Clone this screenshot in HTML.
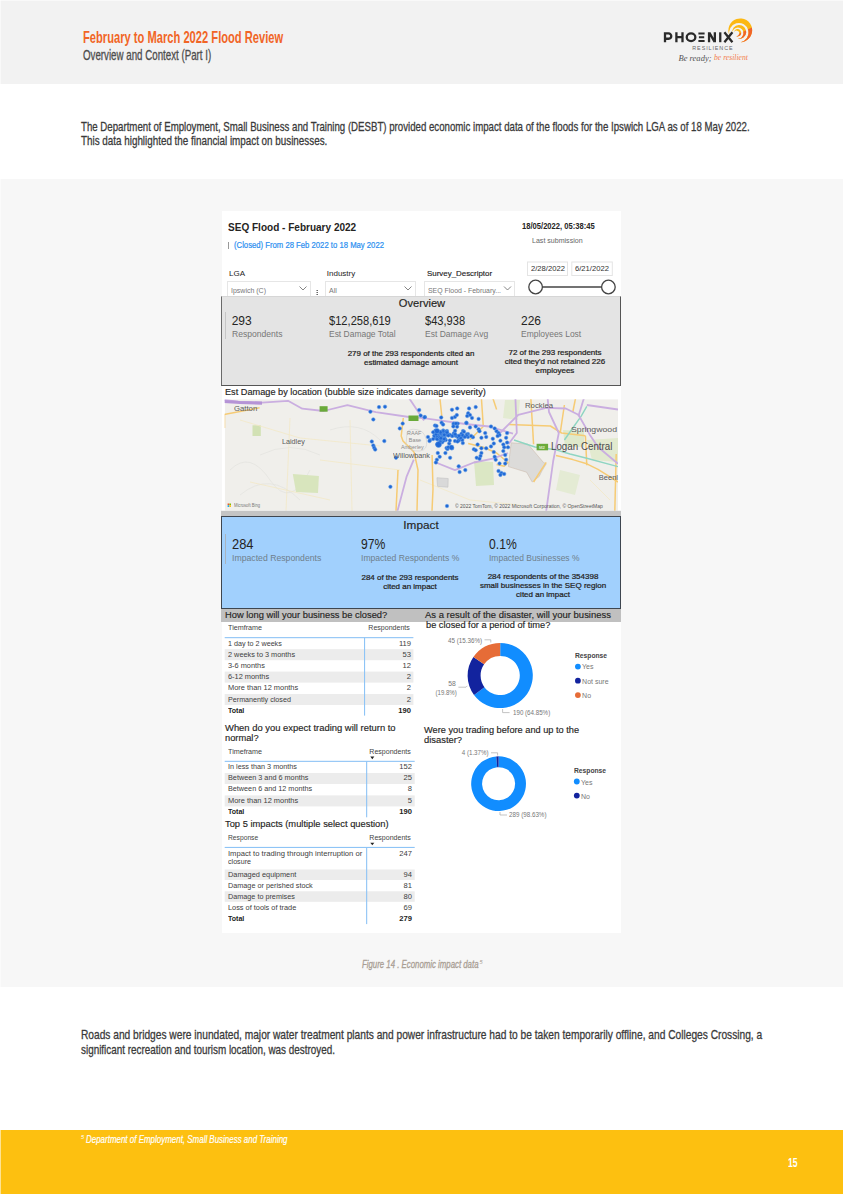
<!DOCTYPE html>
<html><head><meta charset="utf-8">
<style>
html,body{margin:0;padding:0;}
body{width:843px;height:1194px;position:relative;overflow:hidden;background:#fff;font-family:"Liberation Sans",sans-serif;}
.t{position:absolute;white-space:nowrap;line-height:1;}
.b{position:absolute;box-sizing:border-box;}
svg{position:absolute;overflow:visible;}
</style></head><body>
<!-- bands -->
<div class="b" style="left:0;top:0;width:843px;height:84px;background:#f2f2f2"></div>
<div class="b" style="left:0;top:179px;width:843px;height:808px;background:#f7f7f7"></div>
<div class="b" style="left:0;top:1130px;width:843px;height:64px;background:#fdc010"></div>

<div class="b" style="left:0;top:0;width:1px;height:1194px;background:rgba(255,255,255,0.55)"></div>
<div class="b" style="left:0;top:0;width:843px;height:1px;background:rgba(255,255,255,0.5)"></div>
<!-- logo -->
<svg style="left:0;top:0" width="843" height="90" viewBox="0 0 843 90">
  <defs>
    <clipPath id="orng"><path d="M720 38.5 L730 38 L755 26 L760 26 L760 50 L720 50 Z"/></clipPath>
    <g id="swoosh">
      <path d="M729.6 35.6 A11.9 11.9 0 1 1 740.6 42.2 A9.7 9.7 0 1 0 729.6 35.6 Z"/>
      <path d="M732.3 33.2 A7.0 7.0 0 1 1 737.8 38.8 A5.6 5.6 0 1 0 732.3 33.2 Z"/>
      <path d="M733.8 32.6 A3.7 3.7 0 1 1 736.2 36.2 A2.8 2.8 0 1 0 733.8 32.6 Z"/>
    </g>
  </defs>
  <use href="#swoosh" fill="#fcb813"/>
  <use href="#swoosh" fill="#f0642a" clip-path="url(#orng)"/>
  <g fill="none" stroke="#2a2a2a" stroke-width="2.3">
    <path d="M665 42.2 V33.45 H668.6 A2.65 2.65 0 0 1 668.6 38.75 H665"/>
    <path d="M676.4 32.3 V42.2 M682.5 32.3 V42.2 M676.4 37.2 H682.5"/>
    <ellipse cx="691.05" cy="37.25" rx="4.3" ry="3.8"/>
    <path d="M698.4 33.45 H704.6 M698.9 37.25 H704.2 M698.4 41.05 H704.6" stroke-width="2.1"/>
    <path d="M709.05 42.2 V32.3 M714.85 42.2 V32.3 M709.3 32.6 L714.6 41.9"/>
    <path d="M720.25 32.3 V42.2"/>
    <path d="M724.4 32.3 L732.4 42.2 M732.4 32.3 L724.4 42.2"/>
  </g>
  <text x="692.3" y="49.6" font-family="Liberation Sans" font-size="5.4" fill="#666" textLength="40.3" lengthAdjust="spacing">RESILIENCE</text>
  <text x="678.5" y="60.5" font-family="Liberation Serif" font-style="italic" font-size="9" fill="#555555" textLength="33" lengthAdjust="spacingAndGlyphs">Be ready;</text>
  <text x="714" y="59.8" font-family="Liberation Serif" font-style="italic" font-size="8" fill="#f27e4c" textLength="34" lengthAdjust="spacingAndGlyphs">be resilient</text>
</svg>
<!-- dashboard -->
<div class="b" style="left:221.5px;top:211px;width:399.5px;height:722px;background:#fff"></div>
<!-- title accent bar -->
<div class="b" style="left:228.3px;top:242px;width:1px;height:7px;background:#999"></div>
<!-- dropdowns -->
<div class="b" style="left:227.2px;top:281.2px;width:83.4px;height:20px;border:1px solid #e6e6e6;background:#fff"></div>
<div class="b" style="left:325px;top:281.2px;width:91px;height:20px;border:1px solid #e6e6e6;background:#fff"></div>
<div class="b" style="left:424.4px;top:281.2px;width:91px;height:20px;border:1px solid #e6e6e6;background:#fff"></div>
<svg style="left:0;top:0" width="843" height="300" viewBox="0 0 843 300">
  <g fill="none" stroke="#666" stroke-width="0.8">
    <polyline points="299.5,286.5 303,290 306.5,286.5"/>
    <polyline points="404.5,286.5 408,290 411.5,286.5"/>
    <polyline points="504,286.5 507.5,290 511,286.5"/>
  </g>
  <g fill="#555"><rect x="316.5" y="290" width="1.4" height="1"/><rect x="316.5" y="292" width="1.4" height="1"/><rect x="316.5" y="294" width="1.4" height="1"/></g>
  <!-- date boxes -->
  <rect x="527.5" y="262" width="40" height="13.5" fill="#fff" stroke="#e4e4e4" stroke-width="1"/>
  <rect x="571.8" y="262" width="40.5" height="13.5" fill="#fff" stroke="#e4e4e4" stroke-width="1"/>
  <!-- slider -->
  <line x1="542.5" y1="287" x2="601.5" y2="287" stroke="#444" stroke-width="1.4"/>
  <circle cx="535.6" cy="287" r="6.8" fill="#fff" stroke="#444" stroke-width="1.3"/>
  <circle cx="608.4" cy="287" r="6.8" fill="#fff" stroke="#444" stroke-width="1.3"/>
</svg>

<!-- overview panel -->
<div class="b" style="left:221.2px;top:296px;width:399.7px;height:90.4px;background:#e4e4e4;border-left:1.8px solid #6a6a6a;border-right:1.5px solid #555;border-bottom:1.5px solid #555;border-top:1px solid #d6d6d6"></div>
<div class="b" style="left:225.1px;top:311.8px;width:1.3px;height:27.5px;background:#c6c6c6"></div>

<!-- map -->
<svg style="left:0;top:0" width="843" height="520" viewBox="0 0 843 520">
  <defs><clipPath id="mc"><rect x="224.7" y="399.2" width="393.3" height="111.6"/></clipPath></defs>
  <g clip-path="url(#mc)">
    <rect x="224.7" y="399.2" width="393.3" height="111.6" fill="#f0efeb"/>
    <!-- subtle terrain -->
    <g fill="none" stroke="#e3e2de" stroke-width="0.7">
      <path d="M230 470 Q250 450 270 480 T310 470"/>
      <path d="M240 495 Q270 470 300 500"/>
      <path d="M330 430 Q360 420 380 440"/>
      <path d="M260 455 Q290 440 320 455"/>
    </g>
    <!-- green patches -->
    <rect x="252.5" y="425.3" width="8.3" height="10.7" fill="#d2e1b4"/>
    <path d="M292.8 474 L318.9 476 L318 493 L296 492 Z" fill="#d8e5bd"/>
    <path d="M474 461 L493 462 L494 485 L476 486 Z" fill="#dbe7c4"/>
    <path d="M563 430 L584 431 L584 447 L565 447 Z" fill="#dfe9cb"/>
    <path d="M587 440 L618 438 L618 462 L592 460 Z" fill="#e2eacf"/>
    <path d="M505 400 L520 400 L518 420 L503 418 Z" fill="#e3ebd2"/>
    <path d="M560 470 L580 475 L575 495 L556 490 Z" fill="#e4ebd4"/>
    <!-- gray polygons -->
    <path d="M511.2 442.8 L528 444.2 L543.4 462.4 L546.2 463.8 L542 470.8 L539.2 476.4 L532.2 482 L526.6 472.2 L508.4 466.6 L509.8 454 Z" fill="#dcdbd9" stroke="#cdbcae" stroke-width="0.6"/>
    <path d="M436.9 477.7 L448.2 478.5 L448 487.2 L437.5 486.5 Z" fill="#d9d9d9" stroke="#bdbdbd" stroke-width="0.5"/>
    <!-- minor light roads -->
    <g fill="none" stroke="#f2e8c6" stroke-width="0.8">
      <path d="M240 420 L300 438 L380 446"/>
      <path d="M290 418 L286 511"/>
      <path d="M320 460 L400 470"/>
      <path d="M250 482 L330 500"/>
      <path d="M350 420 L352 511"/>
      <path d="M420 480 L470 500 L520 505"/>
      <path d="M590 480 L610 500"/>
    </g>
    <!-- yellow roads -->
    <g fill="none" stroke="#f6cb74" stroke-width="1.5" stroke-linejoin="round">
      <path d="M224 414.6 L259.6 407.7"/>
      <path d="M224.5 414.6 L224.5 428"/>
      <path d="M414 452 L418 470 L417 511"/>
      <path d="M403.3 418 L401.2 436 L403 441 L414 452"/>
      <path d="M432.1 455 L433 489 L432 511"/>
      <path d="M481.4 398 L483.3 426.5 L470 439.7"/>
      <path d="M492.8 398 L496.6 409.4"/>
      <path d="M468.2 443.5 L483.3 447.3 L496.6 453 L508 462.5 L504.2 466.3 L496.6 464.4"/>
      <path d="M508.4 424.6 L550.4 426 L561.6 433 L585.4 435.8"/>
      <path d="M530.8 398 L533.6 444.2"/>
      <path d="M564.4 405 L560.2 433"/>
      <path d="M575.6 398 L572.8 412"/>
      <path d="M556 455.4 L572.8 459.6 L586.8 463.8 L598 469.4 L609.2 476.4 L618 482"/>
      <path d="M585.4 435.8 L586.8 465.2"/>
      <path d="M546.2 462.4 L540.6 470.8 L533.6 482"/>
      <path d="M616.2 454 L614.8 511"/>
      <path d="M398 470 L396 511"/>
      <path d="M440 399 L442 418"/>
    </g>
    <!-- teal -->
    <g fill="none" stroke="#8ed5c2" stroke-width="1.4" stroke-linejoin="round">
      <path d="M514 440 L535 447 L556 449.8 L570 454 L586.8 458.2 L618 466.6"/>
      <path d="M564.4 440 L574.2 426 L581.2 416.2 L586.8 406.4"/>
    </g>
    <!-- purple highways -->
    <g fill="none" stroke="#caaee0" stroke-width="1.8" stroke-linejoin="round">
      <path d="M224 399.9 L238.2 401.6 L262 402.7 L288 400.8 L302.3 408.7 L323.6 411 L347.4 405.1 L361.6 408.7 L375.8 412.2 L409 417 L424 418.2 L432.2 419.4 L465.4 424 L489.2 426.5 L513 433.6"/>
      <path d="M409 398 L424 420.5"/>
      <path d="M413.8 459.7 L406.7 476.3 L397.2 512"/>
      <path d="M435.9 462.5 L454.9 470.1 L473.9 462.5 L492.8 458.7 L508 453"/>
      <path d="M500 433 L518.2 414.8 L546.2 407.8 L565.8 408.5 L578.4 414.8 L589.6 434.4 L598 447 L618 463.8"/>
      <path d="M547.6 398 L549 412 L558.8 433 L553.2 461 L546.2 511"/>
      <path d="M584 398 L578.4 416.2"/>
      <path d="M515.4 398 L516.8 433 L508.4 444.2"/>
      <path d="M586.8 405 L618 409.5"/>
    </g>
    <path d="M224 401.5 L240 402.5 L262 403.2" fill="none" stroke="#b594d6" stroke-width="3.2"/>
    <!-- shields -->
    <rect x="319.6" y="406.2" width="8" height="5.5" fill="#6aaa3a"/>
    <rect x="408.5" y="415.5" width="10" height="5.5" fill="#6aaa3a"/>
    <rect x="536.6" y="443.8" width="11.5" height="6.5" fill="#6aaa3a"/>
    <text x="539" y="449" font-size="4.3" fill="#dfeccc" font-family="Liberation Sans" font-weight="700">M2</text>
    <!-- RAAF label -->
    <path d="M407 432 Q410 428.5 416 429.5 Q424 430 426.5 440 Q428 450 420 451 Q410 451.5 406 446 Z" fill="none" stroke="#cfcfcf" stroke-width="0.6"/>
    <text x="407" y="434.6" font-size="5.4" fill="#8c8c8c" font-family="Liberation Sans">RAAF</text>
    <text x="408.8" y="441.7" font-size="5.4" fill="#8c8c8c" font-family="Liberation Sans">Base</text>
    <text x="401" y="448.5" font-size="5.4" fill="#8c8c8c" font-family="Liberation Sans">Amberley</text>
    <!-- bing logo -->
    <rect x="227.6" y="503.5" width="1.6" height="1.6" fill="#f25022"/><rect x="229.4" y="503.5" width="1.6" height="1.6" fill="#7fba00"/>
    <rect x="227.6" y="505.3" width="1.6" height="1.6" fill="#00a4ef"/><rect x="229.4" y="505.3" width="1.6" height="1.6" fill="#ffb900"/>
    <!-- dots -->
    <g fill="#1f68d6" stroke="#5d9be6" stroke-width="0.55"><circle cx="370.4" cy="411.7" r="1.75"/><circle cx="379.0" cy="407.1" r="1.75"/><circle cx="385.0" cy="406.7" r="1.75"/><circle cx="373.3" cy="419.4" r="1.75"/><circle cx="402.7" cy="423.6" r="1.75"/><circle cx="399.8" cy="428.4" r="1.75"/><circle cx="371.8" cy="441.6" r="1.75"/><circle cx="373.3" cy="445.4" r="1.75"/><circle cx="374.2" cy="447.7" r="1.75"/><circle cx="375.2" cy="449.6" r="1.75"/><circle cx="384.3" cy="441.1" r="1.75"/><circle cx="396.0" cy="457.8" r="1.75"/><circle cx="390.4" cy="486.8" r="1.75"/><circle cx="419.2" cy="410.0" r="1.75"/><circle cx="420.7" cy="415.6" r="1.75"/><circle cx="424.9" cy="417.0" r="1.75"/><circle cx="441.2" cy="417.5" r="1.75"/><circle cx="441.6" cy="422.7" r="1.75"/><circle cx="443.1" cy="424.6" r="1.75"/><circle cx="452.0" cy="409.8" r="1.75"/><circle cx="457.2" cy="408.4" r="1.75"/><circle cx="454.9" cy="417.0" r="1.75"/><circle cx="452.0" cy="417.9" r="1.75"/><circle cx="456.8" cy="415.1" r="1.75"/><circle cx="469.1" cy="408.4" r="1.75"/><circle cx="475.7" cy="407.1" r="1.75"/><circle cx="468.2" cy="413.2" r="1.75"/><circle cx="470.0" cy="415.1" r="1.75"/><circle cx="467.2" cy="416.0" r="1.75"/><circle cx="472.0" cy="417.9" r="1.75"/><circle cx="478.6" cy="418.9" r="1.75"/><circle cx="466.3" cy="422.7" r="1.75"/><circle cx="454.0" cy="423.6" r="1.75"/><circle cx="457.7" cy="423.6" r="1.75"/><circle cx="470.0" cy="427.4" r="1.75"/><circle cx="475.7" cy="426.5" r="1.75"/><circle cx="478.6" cy="429.3" r="1.75"/><circle cx="479.5" cy="431.2" r="1.75"/><circle cx="491.0" cy="426.5" r="1.75"/><circle cx="494.7" cy="428.4" r="1.75"/><circle cx="496.6" cy="431.2" r="1.75"/><circle cx="498.5" cy="433.1" r="1.75"/><circle cx="499.5" cy="435.0" r="1.75"/><circle cx="497.6" cy="436.0" r="1.75"/><circle cx="485.2" cy="433.1" r="1.75"/><circle cx="486.2" cy="436.9" r="1.75"/><circle cx="492.8" cy="438.8" r="1.75"/><circle cx="481.4" cy="437.8" r="1.75"/><circle cx="477.6" cy="444.5" r="1.75"/><circle cx="473.9" cy="449.2" r="1.75"/><circle cx="475.7" cy="450.2" r="1.75"/><circle cx="481.4" cy="448.3" r="1.75"/><circle cx="486.2" cy="448.3" r="1.75"/><circle cx="491.0" cy="446.4" r="1.75"/><circle cx="493.8" cy="443.5" r="1.75"/><circle cx="507.1" cy="433.1" r="1.75"/><circle cx="506.1" cy="437.8" r="1.75"/><circle cx="507.1" cy="442.6" r="1.75"/><circle cx="508.0" cy="447.3" r="1.75"/><circle cx="500.4" cy="440.7" r="1.75"/><circle cx="503.3" cy="444.5" r="1.75"/><circle cx="504.2" cy="447.3" r="1.75"/><circle cx="503.3" cy="451.1" r="1.75"/><circle cx="505.2" cy="454.9" r="1.75"/><circle cx="506.1" cy="459.7" r="1.75"/><circle cx="505.2" cy="463.5" r="1.75"/><circle cx="499.5" cy="463.5" r="1.75"/><circle cx="494.7" cy="456.8" r="1.75"/><circle cx="495.7" cy="459.7" r="1.75"/><circle cx="481.4" cy="453.0" r="1.75"/><circle cx="480.5" cy="455.9" r="1.75"/><circle cx="476.7" cy="457.8" r="1.75"/><circle cx="479.5" cy="458.7" r="1.75"/><circle cx="493.8" cy="452.1" r="1.75"/><circle cx="437.8" cy="453.0" r="1.75"/><circle cx="439.7" cy="456.8" r="1.75"/><circle cx="436.9" cy="459.7" r="1.75"/><circle cx="435.9" cy="462.5" r="1.75"/><circle cx="445.4" cy="453.0" r="1.75"/><circle cx="450.1" cy="457.8" r="1.75"/><circle cx="458.7" cy="466.3" r="1.75"/><circle cx="465.3" cy="470.1" r="1.75"/><circle cx="459.6" cy="472.0" r="1.75"/><circle cx="498.5" cy="471.0" r="1.75"/><circle cx="501.4" cy="473.0" r="1.75"/><circle cx="504.2" cy="473.9" r="1.75"/><circle cx="500.4" cy="474.9" r="1.75"/><circle cx="451.1" cy="447.3" r="1.75"/><circle cx="452.0" cy="448.3" r="1.75"/><circle cx="447.0" cy="506.0" r="1.75"/><circle cx="424.6" cy="417.3" r="1.75"/><circle cx="435.0" cy="425.5" r="1.75"/><circle cx="436.5" cy="426.0" r="1.75"/><circle cx="447.0" cy="431.0" r="1.75"/><circle cx="453.5" cy="424.0" r="1.75"/><circle cx="456.0" cy="423.5" r="1.75"/><circle cx="466.5" cy="423.0" r="1.75"/><circle cx="463.0" cy="431.0" r="1.75"/><circle cx="468.0" cy="434.0" r="1.75"/><circle cx="461.0" cy="436.0" r="1.75"/><circle cx="452.0" cy="436.0" r="1.75"/><circle cx="455.0" cy="441.0" r="1.75"/><circle cx="459.0" cy="440.0" r="1.75"/><circle cx="468.0" cy="437.0" r="1.75"/><circle cx="428.0" cy="437.0" r="1.75"/><circle cx="430.0" cy="440.0" r="1.75"/><circle cx="429.5" cy="441.0" r="1.75"/><circle cx="446.5" cy="448.0" r="1.75"/><circle cx="447.5" cy="449.0" r="1.75"/><circle cx="435.3" cy="437.6" r="1.75"/><circle cx="443.8" cy="433.8" r="1.75"/><circle cx="434.9" cy="435.7" r="1.75"/><circle cx="441.8" cy="440.6" r="1.75"/><circle cx="435.4" cy="430.6" r="1.75"/><circle cx="442.7" cy="438.0" r="1.75"/><circle cx="445.8" cy="440.1" r="1.75"/><circle cx="439.6" cy="434.8" r="1.75"/><circle cx="449.8" cy="434.8" r="1.75"/><circle cx="437.0" cy="431.2" r="1.75"/><circle cx="440.4" cy="436.6" r="1.75"/><circle cx="438.7" cy="435.7" r="1.75"/><circle cx="441.0" cy="438.9" r="1.75"/><circle cx="444.2" cy="436.9" r="1.75"/><circle cx="433.2" cy="438.9" r="1.75"/><circle cx="434.6" cy="435.3" r="1.75"/><circle cx="434.4" cy="436.0" r="1.75"/><circle cx="437.0" cy="436.9" r="1.75"/><circle cx="452.5" cy="435.8" r="1.75"/><circle cx="443.2" cy="430.4" r="1.75"/><circle cx="438.9" cy="438.8" r="1.75"/><circle cx="439.6" cy="437.6" r="1.75"/><circle cx="440.4" cy="431.8" r="1.75"/><circle cx="442.1" cy="432.6" r="1.75"/><circle cx="447.1" cy="433.9" r="1.75"/><circle cx="442.6" cy="436.0" r="1.75"/><circle cx="443.6" cy="433.5" r="1.75"/><circle cx="443.8" cy="435.5" r="1.75"/><circle cx="444.8" cy="438.6" r="1.75"/><circle cx="440.5" cy="432.7" r="1.75"/><circle cx="442.9" cy="438.0" r="1.75"/><circle cx="446.2" cy="434.4" r="1.75"/><circle cx="442.1" cy="438.1" r="1.75"/><circle cx="441.1" cy="436.9" r="1.75"/><circle cx="440.7" cy="433.5" r="1.75"/><circle cx="436.1" cy="434.3" r="1.75"/><circle cx="442.2" cy="442.3" r="1.75"/><circle cx="443.7" cy="440.4" r="1.75"/><circle cx="443.0" cy="438.9" r="1.75"/><circle cx="440.7" cy="439.2" r="1.75"/><circle cx="446.7" cy="434.6" r="1.75"/><circle cx="437.4" cy="444.2" r="1.75"/><circle cx="440.9" cy="440.1" r="1.75"/><circle cx="443.3" cy="431.2" r="1.75"/><circle cx="449.2" cy="443.5" r="1.75"/><circle cx="440.7" cy="439.2" r="1.75"/><circle cx="440.5" cy="432.3" r="1.75"/><circle cx="439.6" cy="437.6" r="1.75"/><circle cx="444.2" cy="439.0" r="1.75"/><circle cx="440.2" cy="441.7" r="1.75"/><circle cx="437.1" cy="439.3" r="1.75"/><circle cx="444.2" cy="434.8" r="1.75"/><circle cx="433.2" cy="432.2" r="1.75"/><circle cx="440.9" cy="438.2" r="1.75"/><circle cx="445.9" cy="431.8" r="1.75"/><circle cx="458.0" cy="437.3" r="1.75"/><circle cx="457.1" cy="426.7" r="1.75"/><circle cx="462.8" cy="443.1" r="1.75"/><circle cx="464.0" cy="431.8" r="1.75"/><circle cx="455.5" cy="435.8" r="1.75"/><circle cx="472.9" cy="437.2" r="1.75"/><circle cx="458.7" cy="440.5" r="1.75"/><circle cx="457.5" cy="441.5" r="1.75"/><circle cx="453.9" cy="433.3" r="1.75"/><circle cx="462.3" cy="440.0" r="1.75"/><circle cx="461.9" cy="436.1" r="1.75"/><circle cx="447.1" cy="432.5" r="1.75"/><circle cx="454.3" cy="433.1" r="1.75"/><circle cx="461.5" cy="433.8" r="1.75"/><circle cx="462.7" cy="435.3" r="1.75"/><circle cx="456.0" cy="435.4" r="1.75"/><circle cx="460.6" cy="438.0" r="1.75"/><circle cx="455.1" cy="434.2" r="1.75"/><circle cx="449.8" cy="440.6" r="1.75"/><circle cx="466.7" cy="434.4" r="1.75"/><circle cx="455.1" cy="430.7" r="1.75"/><circle cx="459.0" cy="435.7" r="1.75"/><circle cx="471.1" cy="435.9" r="1.75"/><circle cx="453.3" cy="426.4" r="1.75"/><circle cx="466.5" cy="435.7" r="1.75"/><circle cx="448.3" cy="435.6" r="1.75"/><circle cx="448.3" cy="447.2" r="1.75"/><circle cx="464.7" cy="437.0" r="1.75"/><circle cx="438.5" cy="444.5" r="3"/><circle cx="437" cy="431" r="2.6"/><circle cx="451.5" cy="447.5" r="2.4"/></g>
  </g>
  <rect x="221" y="510.8" width="400" height="5.2" fill="#c4c4c4"/>
</svg>

<!-- impact panel -->
<div class="b" style="left:221.2px;top:515.8px;width:399.7px;height:93.2px;background:#a1d0fd;border:1.5px solid #3e4650;border-left-width:1.8px"></div>
<div class="b" style="left:225.1px;top:533.8px;width:1.3px;height:30px;background:#a9b4bf"></div>

<!-- section title bands -->
<div class="b" style="left:221px;top:609px;width:400px;height:12.6px;background:#c0c0c0"></div>

<!-- tables -->
<svg style="left:0;top:0" width="843" height="940" viewBox="0 0 843 940">
  <g fill="#ececec">
    <rect x="224.7" y="649.2" width="188.7" height="11"/>
    <rect x="224.7" y="671.6" width="188.7" height="11"/>
    <rect x="224.7" y="694" width="188.7" height="11"/>
    <rect x="224.7" y="773" width="190" height="11"/>
    <rect x="224.7" y="795.4" width="190" height="11"/>
    <rect x="224.7" y="869.5" width="190" height="10.5"/>
    <rect x="224.7" y="891.3" width="190" height="10.5"/>
  </g>
  <g fill="#8ec4f6">
    <rect x="224.7" y="637.1" width="188.7" height="1.1"/>
    <rect x="364" y="637.6" width="1.1" height="78"/>
    <rect x="224.7" y="760.8" width="190" height="1.1"/>
    <rect x="366.1" y="761.3" width="1.1" height="56"/>
    <rect x="224.7" y="846.9" width="190" height="1.1"/>
    <rect x="366.1" y="847.4" width="1.1" height="76.7"/>
  </g>
  <g fill="#222">
    <path d="M370.3 756.6 L374.3 756.6 L372.3 759.2 Z"/>
    <path d="M370.3 842.7 L374.3 842.7 L372.3 845.3 Z"/>
  </g>
  <!-- donut 1: center 500.2,675.5 r 32.6 / 19.6 -->
  <g transform="translate(500.2 675.5)">
    <path id="d1a" fill="#118dff"/>
  </g>
</svg>
<svg style="left:0;top:0" width="843" height="940" viewBox="0 0 843 940">
  <path d="M500.20 642.90 A32.6 32.6 0 1 1 474.01 694.91 L484.45 687.17 A19.6 19.6 0 1 0 500.20 655.90 Z" fill="#118dff"/>
<path d="M474.01 694.91 A32.6 32.6 0 0 1 473.41 656.92 L484.09 664.33 A19.6 19.6 0 0 0 484.45 687.17 Z" fill="#12239e"/>
<path d="M473.41 656.92 A32.6 32.6 0 0 1 500.19 642.90 L500.20 655.90 A19.6 19.6 0 0 0 484.09 664.33 Z" fill="#e66c37"/>
<path d="M498.60 756.30 A27.4 27.4 0 1 1 496.24 756.40 L497.18 767.26 A16.5 16.5 0 1 0 498.60 767.20 Z" fill="#118dff"/>
<path d="M496.24 756.40 A27.4 27.4 0 0 1 498.60 756.30 L498.60 767.20 A16.5 16.5 0 0 0 497.18 767.26 Z" fill="#12239e"/>
  <g fill="#118dff"><circle cx="577.9" cy="666.6" r="2.9"/><circle cx="576.8" cy="781.5" r="2.9"/></g>
  <g fill="#12239e"><circle cx="577.9" cy="680.7" r="2.9"/><circle cx="576.8" cy="795.6" r="2.9"/></g>
  <g fill="#e66c37"><circle cx="577.9" cy="695.1" r="2.9"/></g>
  <g fill="none" stroke="#aaa" stroke-width="0.7">
    <polyline points="484.5,639.8 490.8,639.8 490.8,642.5"/>
    <polyline points="458.4,687.2 466,687.2 467.4,685.8"/>
    <polyline points="502.6,709 502.6,712.6 509.6,712.6"/>
    <polyline points="491,752.8 497.6,752.8 497.6,755.5"/>
    <polyline points="500,812 500,815 507,815"/>
  </g>
</svg>
<div class="t" id="t0" style="top:29.13px;font-size:16.5px;color:#f16526;font-weight:700;left:82.80px;transform:scaleX(0.6760);transform-origin:left 50%;">February to March 2022 Flood Review</div>
<div class="t" id="t1" style="top:47.68px;font-size:14.2px;color:#4d4d4d;-webkit-text-stroke:0.3px #4d4d4d;left:82.80px;transform:scaleX(0.6860);transform-origin:left 50%;">Overview and Context (Part I)</div>
<div class="t" id="t2" style="top:120.00px;font-size:13.0px;color:#3a3a3a;-webkit-text-stroke:0.3px #3a3a3a;left:81.40px;transform:scaleX(0.7432);transform-origin:left 50%;">The Department of Employment, Small Business and Training (DESBT) provided economic impact data of the floods for the Ipswich LGA as of 18 May 2022.</div>
<div class="t" id="t3" style="top:134.20px;font-size:13.0px;color:#3a3a3a;-webkit-text-stroke:0.3px #3a3a3a;left:81.40px;transform:scaleX(0.7574);transform-origin:left 50%;">This data highlighted the financial impact on businesses.</div>
<div class="t" id="t4" style="top:1028.00px;font-size:13.0px;color:#3a3a3a;-webkit-text-stroke:0.3px #3a3a3a;left:81.40px;transform:scaleX(0.7838);transform-origin:left 50%;">Roads and bridges were inundated, major water treatment plants and power infrastructure had to be taken temporarily offline, and Colleges Crossing, a</div>
<div class="t" id="t5" style="top:1042.50px;font-size:13.0px;color:#3a3a3a;-webkit-text-stroke:0.3px #3a3a3a;left:81.40px;transform:scaleX(0.7608);transform-origin:left 50%;">significant recreation and tourism location, was destroyed.</div>
<div class="t" id="t6" style="top:959.41px;font-size:10.5px;color:#a99e94;font-style:italic;-webkit-text-stroke:0.3px #a99e94;left:361.60px;transform:scaleX(0.7448);transform-origin:left 50%;">Figure 14 . Economic impact data</div>
<div class="t" id="t7" style="top:959.84px;font-size:5.5px;color:#a99e94;font-style:italic;left:479.50px;">5</div>
<div class="t" id="t8" style="top:1135.34px;font-size:5.5px;color:#ffffff;font-style:italic;left:81.00px;">5</div>
<div class="t" id="t9" style="top:1135.28px;font-size:10.3px;color:#ffffff;font-style:italic;-webkit-text-stroke:0.2px #ffffff;left:86.00px;transform:scaleX(0.7727);transform-origin:left 50%;">Department of Employment, Small Business and Training</div>
<div class="t" id="t10" style="top:1155.64px;font-size:13.3px;color:#ffffff;font-weight:700;left:788.00px;transform:scaleX(0.6488);transform-origin:left 50%;">15</div>
<div class="t" id="t11" style="top:222.09px;font-size:11px;color:#252423;font-weight:700;left:227.80px;transform:scaleX(0.9118);transform-origin:left 50%;">SEQ Flood - February 2022</div>
<div class="t" id="t12" style="top:241.66px;font-size:8.2px;color:#2b8ff0;-webkit-text-stroke:0.2px #2b8ff0;left:234.20px;transform:scaleX(0.9416);transform-origin:left 50%;">(Closed) From 28 Feb 2022 to 18 May 2022</div>
<div class="t" id="t13" style="top:222.47px;font-size:8.3px;color:#252423;font-weight:700;left:521.70px;transform:scaleX(0.9161);transform-origin:left 50%;">18/05/2022, 05:38:45</div>
<div class="t" id="t14" style="top:237.25px;font-size:7.5px;color:#666666;left:532.40px;transform:scaleX(0.9408);transform-origin:left 50%;">Last submission</div>
<div class="t" id="t15" style="top:269.63px;font-size:8px;color:#252423;-webkit-text-stroke:0.001px #252423;left:229.00px;">LGA</div>
<div class="t" id="t16" style="top:269.63px;font-size:8px;color:#252423;-webkit-text-stroke:0.001px #252423;left:326.80px;">Industry</div>
<div class="t" id="t17" style="top:269.63px;font-size:8px;color:#252423;-webkit-text-stroke:0.15px #252423;left:426.60px;transform:scaleX(0.9892);transform-origin:left 50%;">Survey_Descriptor</div>
<div class="t" id="t18" style="top:286.67px;font-size:7px;color:#777777;left:231.00px;">Ipswich (C)</div>
<div class="t" id="t19" style="top:286.67px;font-size:7px;color:#777777;left:329.00px;">All</div>
<div class="t" id="t20" style="top:286.67px;font-size:7px;color:#777777;left:428.00px;transform:scaleX(0.9892);transform-origin:left 50%;">SEQ Flood - February...</div>
<div class="t" id="t21" style="top:266.00px;font-size:6.5px;color:#333333;left:531.00px;transform:scaleX(1.1756);transform-origin:left 50%;">2/28/2022</div>
<div class="t" id="t22" style="top:266.00px;font-size:6.5px;color:#333333;left:575.00px;transform:scaleX(1.1756);transform-origin:left 50%;">6/21/2022</div>
<div class="t" id="t23" style="top:298.11px;font-size:10.5px;color:#252423;-webkit-text-stroke:0.15px #252423;left:421.60px;transform:translateX(-50%) scaleX(1.0579);transform-origin:center 50%;">Overview</div>
<div class="t" id="t24" style="top:314.54px;font-size:12px;color:#252423;left:231.70px;">293</div>
<div class="t" id="t25" style="top:329.78px;font-size:9px;color:#777777;left:231.70px;transform:scaleX(0.9520);transform-origin:left 50%;">Respondents</div>
<div class="t" id="t26" style="top:314.54px;font-size:12px;color:#252423;left:328.70px;transform:scaleX(0.9261);transform-origin:left 50%;">$12,258,619</div>
<div class="t" id="t27" style="top:329.78px;font-size:9px;color:#777777;left:328.70px;transform:scaleX(0.9397);transform-origin:left 50%;">Est Damage Total</div>
<div class="t" id="t28" style="top:314.54px;font-size:12px;color:#252423;left:424.90px;transform:scaleX(0.9242);transform-origin:left 50%;">$43,938</div>
<div class="t" id="t29" style="top:329.78px;font-size:9px;color:#777777;left:424.90px;transform:scaleX(0.9436);transform-origin:left 50%;">Est Damage Avg</div>
<div class="t" id="t30" style="top:314.54px;font-size:12px;color:#252423;left:521.00px;">226</div>
<div class="t" id="t31" style="top:329.78px;font-size:9px;color:#777777;left:521.00px;transform:scaleX(0.9399);transform-origin:left 50%;">Employees Lost</div>
<div class="t" id="t32" style="top:350.42px;font-size:7.3px;color:#252423;-webkit-text-stroke:0.22px #252423;left:410.70px;transform:translateX(-50%) scaleX(1.0873);transform-origin:center 50%;">279 of the 293 respondents cited an</div>
<div class="t" id="t33" style="top:358.62px;font-size:7.3px;color:#252423;-webkit-text-stroke:0.22px #252423;left:410.70px;transform:translateX(-50%) scaleX(1.0873);transform-origin:center 50%;">estimated damage amount</div>
<div class="t" id="t34" style="top:349.02px;font-size:7.3px;color:#252423;-webkit-text-stroke:0.22px #252423;left:555.40px;transform:translateX(-50%) scaleX(1.0979);transform-origin:center 50%;">72 of the 293 respondents</div>
<div class="t" id="t35" style="top:358.02px;font-size:7.3px;color:#252423;-webkit-text-stroke:0.22px #252423;left:555.40px;transform:translateX(-50%) scaleX(1.0979);transform-origin:center 50%;">cited they'd not retained 226</div>
<div class="t" id="t36" style="top:366.52px;font-size:7.3px;color:#252423;-webkit-text-stroke:0.22px #252423;left:555.40px;transform:translateX(-50%) scaleX(1.0979);transform-origin:center 50%;">employees</div>
<div class="t" id="t37" style="top:387.83px;font-size:9.3px;color:#252423;-webkit-text-stroke:0.15px #252423;left:224.70px;transform:scaleX(0.9876);transform-origin:left 50%;">Est Damage by location (bubble size indicates damage severity)</div>
<div class="t" id="t38" style="top:519.61px;font-size:10.5px;color:#252423;-webkit-text-stroke:0.15px #252423;left:421.40px;transform:translateX(-50%) scaleX(1.1201);transform-origin:center 50%;">Impact</div>
<div class="t" id="t39" style="top:536.75px;font-size:14px;color:#252423;left:231.70px;transform:scaleX(0.9204);transform-origin:left 50%;">284</div>
<div class="t" id="t40" style="top:553.26px;font-size:9.5px;color:#6f7f8c;left:231.70px;transform:scaleX(0.9140);transform-origin:left 50%;">Impacted Respondents</div>
<div class="t" id="t41" style="top:536.75px;font-size:14px;color:#252423;left:360.60px;transform:scaleX(0.8705);transform-origin:left 50%;">97%</div>
<div class="t" id="t42" style="top:553.26px;font-size:9.5px;color:#6f7f8c;left:360.60px;transform:scaleX(0.9035);transform-origin:left 50%;">Impacted Respondents %</div>
<div class="t" id="t43" style="top:536.75px;font-size:14px;color:#252423;left:488.80px;transform:scaleX(0.8677);transform-origin:left 50%;">0.1%</div>
<div class="t" id="t44" style="top:553.26px;font-size:9.5px;color:#6f7f8c;left:488.80px;transform:scaleX(0.8926);transform-origin:left 50%;">Impacted Businesses %</div>
<div class="t" id="t45" style="top:574.32px;font-size:7.3px;color:#252423;-webkit-text-stroke:0.22px #252423;left:410.30px;transform:translateX(-50%) scaleX(1.0927);transform-origin:center 50%;">284 of the 293 respondents</div>
<div class="t" id="t46" style="top:583.22px;font-size:7.3px;color:#252423;-webkit-text-stroke:0.22px #252423;left:410.30px;transform:translateX(-50%) scaleX(1.0927);transform-origin:center 50%;">cited an impact</div>
<div class="t" id="t47" style="top:573.02px;font-size:7.3px;color:#252423;-webkit-text-stroke:0.22px #252423;left:543.40px;transform:translateX(-50%) scaleX(1.0957);transform-origin:center 50%;">284 respondents of the 354398</div>
<div class="t" id="t48" style="top:582.02px;font-size:7.3px;color:#252423;-webkit-text-stroke:0.22px #252423;left:543.40px;transform:translateX(-50%) scaleX(1.0957);transform-origin:center 50%;">small businesses in the SEQ region</div>
<div class="t" id="t49" style="top:591.22px;font-size:7.3px;color:#252423;-webkit-text-stroke:0.22px #252423;left:543.40px;transform:translateX(-50%) scaleX(1.0957);transform-origin:center 50%;">cited an impact</div>
<div class="t" id="t50" style="top:611.03px;font-size:9.3px;color:#252423;-webkit-text-stroke:0.15px #252423;left:224.70px;transform:scaleX(1.0028);transform-origin:left 50%;">How long will your business be closed?</div>
<div class="t" id="t51" style="top:611.03px;font-size:9.3px;color:#252423;-webkit-text-stroke:0.15px #252423;left:425.40px;transform:scaleX(1.0197);transform-origin:left 50%;">As a result of the disaster, will your business</div>
<div class="t" id="t52" style="top:620.73px;font-size:9.3px;color:#252423;-webkit-text-stroke:0.15px #252423;left:425.70px;transform:scaleX(0.9938);transform-origin:left 50%;">be closed for a period of time?</div>
<div class="t" id="t53" style="top:625.29px;font-size:7.1px;color:#444444;left:227.70px;transform:scaleX(1.0137);transform-origin:left 50%;">Tiemframe</div>
<div class="t" id="t54" style="top:625.29px;font-size:7.1px;color:#444444;right:432.80px;transform:scaleX(0.9925);transform-origin:right 50%;">Respondents</div>
<div class="t" id="t55" style="top:640.07px;font-size:7.6px;color:#404040;left:227.70px;transform:scaleX(0.9439);transform-origin:left 50%;">1 day to 2 weeks</div>
<div class="t" id="t56" style="top:640.07px;font-size:7.6px;color:#404040;right:432.00px;">119</div>
<div class="t" id="t57" style="top:651.17px;font-size:7.6px;color:#404040;left:227.70px;transform:scaleX(0.9633);transform-origin:left 50%;">2 weeks to 3 months</div>
<div class="t" id="t58" style="top:651.17px;font-size:7.6px;color:#404040;right:432.00px;">53</div>
<div class="t" id="t59" style="top:662.27px;font-size:7.6px;color:#404040;left:227.70px;transform:scaleX(0.9711);transform-origin:left 50%;">3-6 months</div>
<div class="t" id="t60" style="top:662.27px;font-size:7.6px;color:#404040;right:432.00px;">12</div>
<div class="t" id="t61" style="top:673.37px;font-size:7.6px;color:#404040;left:227.70px;transform:scaleX(0.9735);transform-origin:left 50%;">6-12 months</div>
<div class="t" id="t62" style="top:673.37px;font-size:7.6px;color:#404040;right:432.00px;">2</div>
<div class="t" id="t63" style="top:684.47px;font-size:7.6px;color:#404040;left:227.70px;transform:scaleX(0.9782);transform-origin:left 50%;">More than 12 months</div>
<div class="t" id="t64" style="top:684.47px;font-size:7.6px;color:#404040;right:432.00px;">2</div>
<div class="t" id="t65" style="top:695.57px;font-size:7.6px;color:#404040;left:227.70px;transform:scaleX(0.9430);transform-origin:left 50%;">Permanently closed</div>
<div class="t" id="t66" style="top:695.57px;font-size:7.6px;color:#404040;right:432.00px;">2</div>
<div class="t" id="t67" style="top:706.67px;font-size:7.6px;color:#222222;font-weight:700;left:227.70px;transform:scaleX(0.9273);transform-origin:left 50%;">Total</div>
<div class="t" id="t68" style="top:706.67px;font-size:7.6px;color:#222222;font-weight:700;right:432.00px;">190</div>
<div class="t" id="t69" style="top:723.63px;font-size:9.3px;color:#252423;-webkit-text-stroke:0.15px #252423;left:225.00px;transform:scaleX(1.0127);transform-origin:left 50%;">When do you expect trading will return to</div>
<div class="t" id="t70" style="top:733.93px;font-size:9.3px;color:#252423;-webkit-text-stroke:0.15px #252423;left:225.00px;">normal?</div>
<div class="t" id="t71" style="top:748.79px;font-size:7.1px;color:#444444;left:227.70px;transform:scaleX(1.0137);transform-origin:left 50%;">Timeframe</div>
<div class="t" id="t72" style="top:748.79px;font-size:7.1px;color:#444444;right:431.90px;transform:scaleX(0.9925);transform-origin:right 50%;">Respondents</div>
<div class="t" id="t73" style="top:763.27px;font-size:7.6px;color:#404040;left:227.70px;transform:scaleX(0.9545);transform-origin:left 50%;">In less than 3 months</div>
<div class="t" id="t74" style="top:763.27px;font-size:7.6px;color:#404040;right:431.00px;">152</div>
<div class="t" id="t75" style="top:774.37px;font-size:7.6px;color:#404040;left:227.70px;transform:scaleX(0.9570);transform-origin:left 50%;">Between 3 and 6 months</div>
<div class="t" id="t76" style="top:774.37px;font-size:7.6px;color:#404040;right:431.00px;">25</div>
<div class="t" id="t77" style="top:785.47px;font-size:7.6px;color:#404040;left:227.70px;transform:scaleX(0.9531);transform-origin:left 50%;">Between 6 and 12 months</div>
<div class="t" id="t78" style="top:785.47px;font-size:7.6px;color:#404040;right:431.00px;">8</div>
<div class="t" id="t79" style="top:796.57px;font-size:7.6px;color:#404040;left:227.70px;transform:scaleX(0.9782);transform-origin:left 50%;">More than 12 months</div>
<div class="t" id="t80" style="top:796.57px;font-size:7.6px;color:#404040;right:431.00px;">5</div>
<div class="t" id="t81" style="top:807.87px;font-size:7.6px;color:#222222;font-weight:700;left:227.70px;transform:scaleX(0.9273);transform-origin:left 50%;">Total</div>
<div class="t" id="t82" style="top:807.87px;font-size:7.6px;color:#222222;font-weight:700;right:431.00px;">190</div>
<div class="t" id="t83" style="top:820.43px;font-size:9.3px;color:#252423;-webkit-text-stroke:0.15px #252423;left:225.00px;transform:scaleX(1.0050);transform-origin:left 50%;">Top 5 impacts (multiple select question)</div>
<div class="t" id="t84" style="top:834.99px;font-size:7.1px;color:#444444;left:227.70px;transform:scaleX(0.9451);transform-origin:left 50%;">Response</div>
<div class="t" id="t85" style="top:834.99px;font-size:7.1px;color:#444444;right:431.90px;transform:scaleX(0.9925);transform-origin:right 50%;">Respondents</div>
<div class="t" id="t86" style="top:849.57px;font-size:7.6px;color:#404040;left:227.70px;transform:scaleX(1.0068);transform-origin:left 50%;">Impact to trading through interruption or</div>
<div class="t" id="t87" style="top:849.57px;font-size:7.6px;color:#404040;right:431.00px;">247</div>
<div class="t" id="t88" style="top:858.47px;font-size:7.6px;color:#404040;left:227.70px;transform:scaleX(0.9394);transform-origin:left 50%;">closure</div>
<div class="t" id="t89" style="top:870.57px;font-size:7.6px;color:#404040;left:227.70px;transform:scaleX(0.9688);transform-origin:left 50%;">Damaged equipment</div>
<div class="t" id="t90" style="top:870.57px;font-size:7.6px;color:#404040;right:431.00px;">94</div>
<div class="t" id="t91" style="top:881.77px;font-size:7.6px;color:#404040;left:227.70px;transform:scaleX(0.9555);transform-origin:left 50%;">Damage or perished stock</div>
<div class="t" id="t92" style="top:881.77px;font-size:7.6px;color:#404040;right:431.00px;">81</div>
<div class="t" id="t93" style="top:892.87px;font-size:7.6px;color:#404040;left:227.70px;transform:scaleX(0.9534);transform-origin:left 50%;">Damage to premises</div>
<div class="t" id="t94" style="top:892.87px;font-size:7.6px;color:#404040;right:431.00px;">80</div>
<div class="t" id="t95" style="top:903.87px;font-size:7.6px;color:#404040;left:227.70px;transform:scaleX(0.9688);transform-origin:left 50%;">Loss of tools of trade</div>
<div class="t" id="t96" style="top:903.87px;font-size:7.6px;color:#404040;right:431.00px;">69</div>
<div class="t" id="t97" style="top:914.97px;font-size:7.6px;color:#222222;font-weight:700;left:227.70px;transform:scaleX(0.9273);transform-origin:left 50%;">Total</div>
<div class="t" id="t98" style="top:914.97px;font-size:7.6px;color:#222222;font-weight:700;right:431.00px;">279</div>
<div class="t" id="t99" style="top:726.03px;font-size:9.3px;color:#252423;-webkit-text-stroke:0.15px #252423;left:424.30px;transform:scaleX(0.9915);transform-origin:left 50%;">Were you trading before and up to the</div>
<div class="t" id="t100" style="top:736.43px;font-size:9.3px;color:#252423;-webkit-text-stroke:0.15px #252423;left:424.30px;transform:scaleX(1.0097);transform-origin:left 50%;">disaster?</div>
<div class="t" id="t101" style="top:637.94px;font-size:6.8px;color:#777777;right:361.10px;transform:scaleX(0.9208);transform-origin:right 50%;">45 (15.36%)</div>
<div class="t" id="t102" style="top:680.94px;font-size:6.8px;color:#777777;right:387.20px;">58</div>
<div class="t" id="t103" style="top:689.84px;font-size:6.8px;color:#777777;right:386.70px;transform:scaleX(0.8945);transform-origin:right 50%;">(19.8%)</div>
<div class="t" id="t104" style="top:709.84px;font-size:6.8px;color:#777777;left:512.50px;transform:scaleX(0.9115);transform-origin:left 50%;">190 (64.85%)</div>
<div class="t" id="t105" style="top:651.67px;font-size:7px;color:#444444;font-weight:700;left:575.10px;transform:scaleX(0.9591);transform-origin:left 50%;">Response</div>
<div class="t" id="t106" style="top:663.47px;font-size:7px;color:#777777;left:582.10px;">Yes</div>
<div class="t" id="t107" style="top:677.67px;font-size:7px;color:#777777;left:582.10px;">Not sure</div>
<div class="t" id="t108" style="top:692.07px;font-size:7px;color:#777777;left:582.10px;">No</div>
<div class="t" id="t109" style="top:750.44px;font-size:6.8px;color:#777777;right:355.00px;transform:scaleX(0.9060);transform-origin:right 50%;">4 (1.37%)</div>
<div class="t" id="t110" style="top:811.94px;font-size:6.8px;color:#777777;left:509.00px;transform:scaleX(0.9188);transform-origin:left 50%;">289 (98.63%)</div>
<div class="t" id="t111" style="top:766.77px;font-size:7px;color:#444444;font-weight:700;left:574.00px;transform:scaleX(0.9591);transform-origin:left 50%;">Response</div>
<div class="t" id="t112" style="top:778.57px;font-size:7px;color:#777777;left:581.00px;">Yes</div>
<div class="t" id="t113" style="top:792.67px;font-size:7px;color:#777777;left:581.00px;">No</div>
<div class="t" id="t114" style="top:405.03px;font-size:8px;color:#5a5a5a;left:234.00px;transform:scaleX(0.9660);transform-origin:left 50%;">Gatton</div>
<div class="t" id="t115" style="top:437.53px;font-size:8px;color:#5a5a5a;left:282.20px;transform:scaleX(0.8991);transform-origin:left 50%;">Laidley</div>
<div class="t" id="t116" style="top:401.93px;font-size:8px;color:#5a5a5a;left:524.90px;transform:scaleX(0.9686);transform-origin:left 50%;">Rocklea</div>
<div class="t" id="t117" style="top:425.93px;font-size:8px;color:#5a5a5a;left:570.80px;transform:scaleX(1.0888);transform-origin:left 50%;">Springwood</div>
<div class="t" id="t118" style="top:441.54px;font-size:10px;color:#4a4a4a;left:550.80px;transform:scaleX(0.9773);transform-origin:left 50%;">Logan Central</div>
<div class="t" id="t119" style="top:474.35px;font-size:7.5px;color:#5a5a5a;left:598.80px;">Beenl</div>
<div class="t" id="t120" style="top:451.90px;font-size:7.8px;color:#5a5a5a;left:393.00px;transform:scaleX(0.9382);transform-origin:left 50%;">Willowbank</div>
<div class="t" id="t121" style="top:504.99px;font-size:4.5px;color:#555555;left:455.00px;transform:scaleX(1.1118);transform-origin:left 50%;">© 2022 TomTom, © 2022 Microsoft Corporation, © OpenStreetMap</div>
<div class="t" id="t122" style="top:503.69px;font-size:4.5px;color:#777777;left:234.00px;transform:scaleX(0.9118);transform-origin:left 50%;">Microsoft Bing</div>
</body></html>
